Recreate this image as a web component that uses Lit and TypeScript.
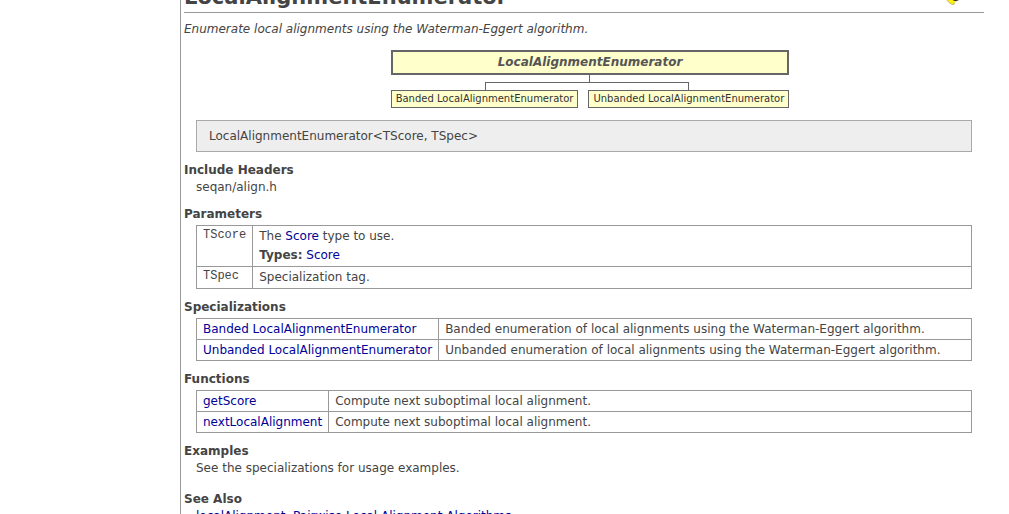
import { LitElement, html, css, svg } from "lit";
import { customElement } from "lit/decorators.js";

const specializations = [
  { name: "Banded LocalAlignmentEnumerator", text: "Banded enumeration of local alignments using the Waterman-Eggert algorithm." },
  { name: "Unbanded LocalAlignmentEnumerator", text: "Unbanded enumeration of local alignments using the Waterman-Eggert algorithm." },
];

const functions = [
  { name: "getScore", text: "Compute next suboptimal local alignment." },
  { name: "nextLocalAlignment", text: "Compute next suboptimal local alignment." },
];

const marker = svg`
  <path d="M0 12 L2 16 L5 19 L8 19.5 L9 17 L10 12 Z" fill="#ffee11"/>
  <path d="M0.5 14.5 L2.5 17 L5.5 19.2 L7.8 19.5 L8.6 17.5" fill="none" stroke="#a8a860" stroke-width="0.8"/>
  <path d="M6 12 L13 12 L12.5 15.3 L10 16.3 L7.5 15.8 Z" fill="#333333"/>`;

@customElement("app-root")
export class AppRoot extends LitElement {
  static styles = css`
    :host {
      display: block;
      height: 100vh;
      overflow: hidden;
      background: #ffffff;
      color: #444444;
      font: 12px/16px Verdana, "DejaVu Sans", sans-serif;
    }
    a {
      color: #000099;
      text-decoration: none;
    }
    main {
      min-height: 100%;
      margin-left: 180px;
      padding: 0 25px 0 3px;
      border-left: 1px solid #999999;
    }
    header {
      display: flex;
      justify-content: space-between;
      margin-top: -15px;
      padding: 0 24px 3px 0;
      border-bottom: 1px solid #999999;
    }
    h1 {
      margin: 0;
      font-size: 21px;
      line-height: 24px;
    }
    .marker {
      width: 14px;
      height: 24px;
    }
    .summary {
      margin: 8px 0 0;
      font-style: italic;
    }
    .tree {
      display: grid;
      grid-template-columns: auto auto;
      column-gap: 10px;
      width: fit-content;
      margin: 13px auto 12px;
      padding-left: 12px;
    }
    .root {
      grid-column: 1 / 3;
      padding: 3px;
      border: 2px solid #666666;
      background: #ffffcc;
      color: #555555;
      font-weight: bold;
      font-style: italic;
      line-height: 15px;
      text-align: center;
    }
    .stem {
      grid-column: 1 / 3;
      justify-self: center;
      width: 1px;
      height: 7px;
      background: #666666;
    }
    .branch {
      height: 7px;
      border-top: 1px solid #666666;
    }
    .branch.left {
      margin: 0 -10px 0 50%;
      border-left: 1px solid #666666;
    }
    .branch.right {
      margin-right: 50%;
      border-right: 1px solid #666666;
    }
    .leaf {
      padding: 0 4px;
      border: 1px solid #666666;
      background: #ffffcc;
      color: #333333;
      font-size: 10px;
      white-space: nowrap;
    }
    .signature {
      margin: 0 12px;
      padding: 7px 12px;
      border: 1px solid #aaaaaa;
      background: #eeeeee;
    }
    h2 {
      margin: 10px 0 0;
      font-size: 12px;
    }
    p {
      margin: 1px 12px 11px;
    }
    .examples {
      margin-bottom: 15px;
    }
    .table {
      padding: 3px 12px 0;
    }
    table {
      width: 100%;
      border-collapse: collapse;
    }
    td,
    th {
      padding: 2px 6px;
      border: 1px solid #999999;
      text-align: left;
      vertical-align: top;
      font-weight: normal;
    }
    th {
      width: 1px;
      white-space: nowrap;
    }
    .params td {
      line-height: 19px;
      padding: 1px 6px;
    }
    .params th {
      padding-top: 1px;
      line-height: 14px;
    }
    code {
      font: 12px/14px "Courier New", "Liberation Mono", monospace;
    }
  `;

  private reference(rows: { name: string; text: string }[]) {
    return html`<div class="table"><table>
      ${rows.map((r) => html`<tr><th scope="row"><a href="#">${r.name}</a></th><td>${r.text}</td></tr>`)}
    </table></div>`;
  }

  render() {
    return html`<main>
      <header>
        <h1>LocalAlignmentEnumerator</h1>
        <svg class="marker" viewBox="0 0 14 24" aria-hidden="true">${marker}</svg>
      </header>
      <div class="summary">Enumerate local alignments using the Waterman-Eggert algorithm.</div>
      <div class="tree">
        <div class="root">LocalAlignmentEnumerator</div>
        <div class="stem"></div>
        <div class="branch left"></div>
        <div class="branch right"></div>
        <a class="leaf" href="#">Banded LocalAlignmentEnumerator</a>
        <a class="leaf" href="#">Unbanded LocalAlignmentEnumerator</a>
      </div>
      <div class="signature">LocalAlignmentEnumerator&lt;TScore, TSpec&gt;</div>
      <h2>Include Headers</h2>
      <p>seqan/align.h</p>
      <h2>Parameters</h2>
      <div class="table"><table class="params">
        <tr>
          <th scope="row"><code>TScore</code></th>
          <td>The <a href="#">Score</a> type to use.<br /><b>Types:</b> <a href="#">Score</a></td>
        </tr>
        <tr><th scope="row"><code>TSpec</code></th><td>Specialization tag.</td></tr>
      </table></div>
      <h2>Specializations</h2>
      ${this.reference(specializations)}
      <h2>Functions</h2>
      ${this.reference(functions)}
      <h2>Examples</h2>
      <p class="examples">See the specializations for usage examples.</p>
      <h2>See Also</h2>
      <p><a href="#">localAlignment</a>, <a href="#">Pairwise Local Alignment Algorithms</a></p>
    </main>`;
  }
}
